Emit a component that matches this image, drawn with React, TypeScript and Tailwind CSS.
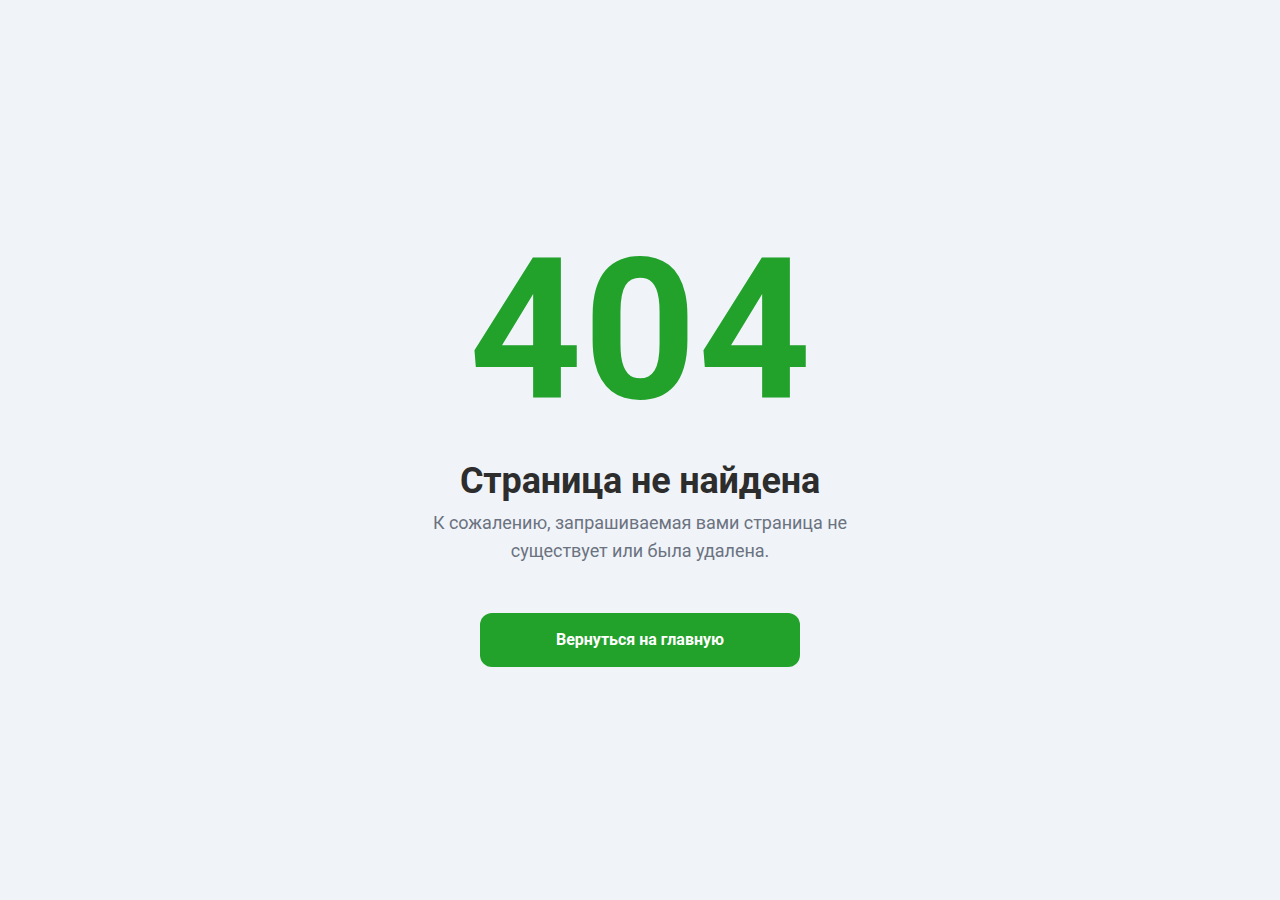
import React from "react";

export default function App() {
  return (
    <div
      className="min-h-screen w-full bg-[#f0f4f9] flex items-center justify-center"
      style={{ fontFamily: "Roboto, 'Noto Sans', sans-serif" }}
    >
      <div className="flex flex-col items-center text-center">
        <div className="text-[197px] leading-[196px] font-bold text-[#22a12b] mb-8 tracking-[1.5px] pl-[1.5px]">404</div>
        <h1 className="text-4xl font-bold text-[#2d2d2d] mb-2 tracking-[-0.15px]">Страница не найдена</h1>
        <p className="text-lg text-[#6b7280] max-w-[420px] mb-12 tracking-[-0.04px]">
          К сожалению, запрашиваемая вами страница не существует или была удалена.
        </p>
        <button className="w-[320px] h-[54px] rounded-xl bg-[#22a12b] text-white font-bold text-base">
          Вернуться на главную
        </button>
      </div>
    </div>
  );
}
